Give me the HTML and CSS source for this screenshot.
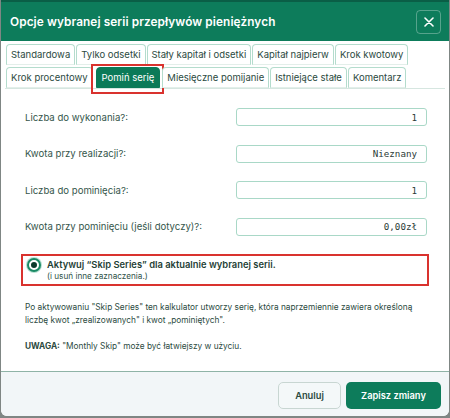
FILE: index.html
```html
<!DOCTYPE html>
<html lang="pl">
<head>
  <meta charset="UTF-8">
  <meta name="viewport" content="width=device-width, initial-scale=1.0">
  <title>Opcje serii</title>
  <link rel="stylesheet" href="styles.css">
</head>
<body>
  <div class="modal">
    <div class="modal-header">
      <h2>Opcje wybranej serii przepływów pieniężnych</h2>
      <button class="close-btn" aria-label="Zamknij">
        <svg width="10" height="10" viewBox="0 0 10 10"><path d="M1 1L9 9M9 1L1 9" stroke="#fff" stroke-width="1.6" stroke-linecap="round"/></svg>
      </button>
    </div>

    <div class="tabs">
      <button class="tab">Standardowa</button>
      <button class="tab">Tylko odsetki</button>
      <button class="tab">Stały kapitał i odsetki</button>
      <button class="tab">Kapitał najpierw</button>
      <button class="tab">Krok kwotowy</button>
      <button class="tab">Krok procentowy</button>
      <button class="tab active">Pomiń serię</button>
      <button class="tab">Miesięczne pomijanie</button>
      <button class="tab">Istniejące stałe</button>
      <button class="tab">Komentarz</button>
    </div>

    <div class="modal-body">
      <div class="field">
        <label for="doCount">Liczba do wykonania?:</label>
        <input id="doCount" type="text" value="1">
      </div>
      <div class="field">
        <label for="doAmount">Kwota przy realizacji?:</label>
        <input id="doAmount" type="text" value="Nieznany">
      </div>
      <div class="field">
        <label for="skipCount">Liczba do pominięcia?:</label>
        <input id="skipCount" type="text" value="1">
      </div>
      <div class="field">
        <label for="skipAmount">Kwota przy pominięciu (jeśli dotyczy)?:</label>
        <input id="skipAmount" type="text" value="0,00zł">
      </div>

      <label class="skip-option">
        <span class="radio"></span>
        <span>
          <strong>Aktywuj “Skip Series” dla aktualnie wybranej serii.</strong>
          <small>(i usuń inne zaznaczenia.)</small>
        </span>
      </label>

      <p class="note">Po aktywowaniu "Skip Series" ten kalkulator utworzy serię, która naprzemiennie zawiera określoną liczbę kwot „zrealizowanych" i kwot „pominiętych".</p>
      <p class="note warn"><b>UWAGA:</b> "Monthly Skip" może być łatwiejszy w użyciu.</p>
    </div>

    <div class="modal-footer">
      <button class="btn btn-cancel">Anuluj</button>
      <button class="btn btn-save">Zapisz zmiany</button>
    </div>
  </div>
</body>
</html>
```

FILE: styles.css
```css
body {
  margin: 0;
  background-color: #7f8684;
  font-family: 'Inter', 'Noto Sans', sans-serif;
  color: #2b4a41;
}
.modal {
  width: 448px;
  height: 416px;
  margin: 0 0 0 1px;
  background-color: #FFFFFF;
  border-radius: 0 0 6px 6px;
  overflow: hidden;
  display: flex;
  flex-direction: column;
}
.modal-header {
  height: 41px;
  flex-shrink: 0;
  display: flex;
  align-items: center;
  justify-content: space-between;
  padding: 0 8px 0 9px;
  box-sizing: border-box;
  background-color: #0d7c5b;
  border-top: 2px solid #0a5e46;
}
.modal-header h2 {
  margin: 0;
  font-size: 11.8px;
  font-weight: 600;
  color: #FFFFFF;
  letter-spacing: 0.1px;
}
.close-btn {
  width: 25px;
  height: 24px;
  display: flex;
  align-items: center;
  justify-content: center;
  padding: 0;
  background: transparent;
  border: 1px solid rgba(255,255,255,0.3);
  border-radius: 4px;
  cursor: pointer;
}

/* tab strip, wraps onto two rows */
.tabs {
  display: flex;
  flex-wrap: wrap;
  gap: 2px 1px;
  margin: 3px 4px 0 4px;
  padding: 0 0 0 1px;
  border-bottom: 1px solid #d6e6e0;
}
.tab {
  position: relative;
  height: 21px;
  padding: 0 4px;
  font-family: 'Inter', 'Noto Sans', sans-serif;
  font-size: 9.5px;
  color: #2b4a41;
  background-color: #FFFFFF;
  border: 1px solid #b4dccd;
  border-bottom-color: #e3efea;
  border-radius: 4px 4px 0 0;
  cursor: pointer;
}
.tab.active {
  margin-left: 2px;
  margin-right: 1px;
  padding: 0 5px;
  background-color: #0b7a58;
  border-color: #0b7a58;
  color: #FFFFFF;
}
.tab.active::after {
  content: '';
  position: absolute;
  left: -6px;
  right: -5px;
  top: -4px;
  bottom: -7px;
  border: 2px solid #d9322e;
}

.modal-body {
  flex: 1;
  padding: 19px 22px 0 24px;
}
.field {
  display: flex;
  align-items: center;
  justify-content: space-between;
  height: 18px;
  margin-bottom: 18.5px;
}
.field label {
  font-size: 9.6px;
  color: #34564b;
}
.field input {
  width: 191px;
  height: 18px;
  box-sizing: border-box;
  padding: 0 9px;
  text-align: right;
  font-family: 'DejaVu Sans Mono', monospace;
  font-size: 9.2px;
  color: #2b3a36;
  border: 1px solid #a9d8c7;
  border-radius: 3px;
}
.skip-option {
  display: flex;
  align-items: flex-start;
  gap: 8px;
  margin: 0 -2px 0 -4px;
  padding: 2px 5px 2px 5px;
  border: 2px solid #d9322e;
  cursor: pointer;
}
.skip-option strong {
  display: block;
  font-size: 9.4px;
  font-weight: 600;
  color: #1f4136;
  line-height: 13px;
}
.skip-option small {
  display: block;
  font-size: 8.2px;
  color: #2f5247;
  line-height: 11px;
}
.radio {
  width: 6px;
  height: 6px;
  margin-top: 2px;
  border-radius: 50%;
  background-color: #0b3b2c;
  border: 2px solid #FFFFFF;
  box-shadow: 0 0 0 2px #1a8a65, 0 0 0 3px #b8e0d2;
  flex-shrink: 0;
  margin-left: 1px;
}
.note {
  margin: 15px 0 0 0;
  font-size: 8.3px;
  line-height: 13px;
  color: #2b4a41;
}
.note.warn {
  margin-top: 13px;
}

.modal-footer {
  height: 45px;
  flex-shrink: 0;
  display: flex;
  justify-content: flex-end;
  align-items: flex-start;
  gap: 5px;
  padding: 10px 8px 0 0;
  box-sizing: border-box;
  background-color: #f2f6f8;
  border-top: 1px solid #8fb3a7;
}
.btn {
  height: 27px;
  font-family: 'Inter', 'Noto Sans', sans-serif;
  font-size: 9.3px;
  font-weight: 600;
  border-radius: 5px;
  cursor: pointer;
}
.btn-cancel {
  width: 63px;
  background-color: #f4f8f9;
  color: #2b4a41;
  border: 1px solid #c8d6d2;
}
.btn-save {
  width: 95px;
  background-color: #0d7c5b;
  color: #FFFFFF;
  border: none;
}
```
